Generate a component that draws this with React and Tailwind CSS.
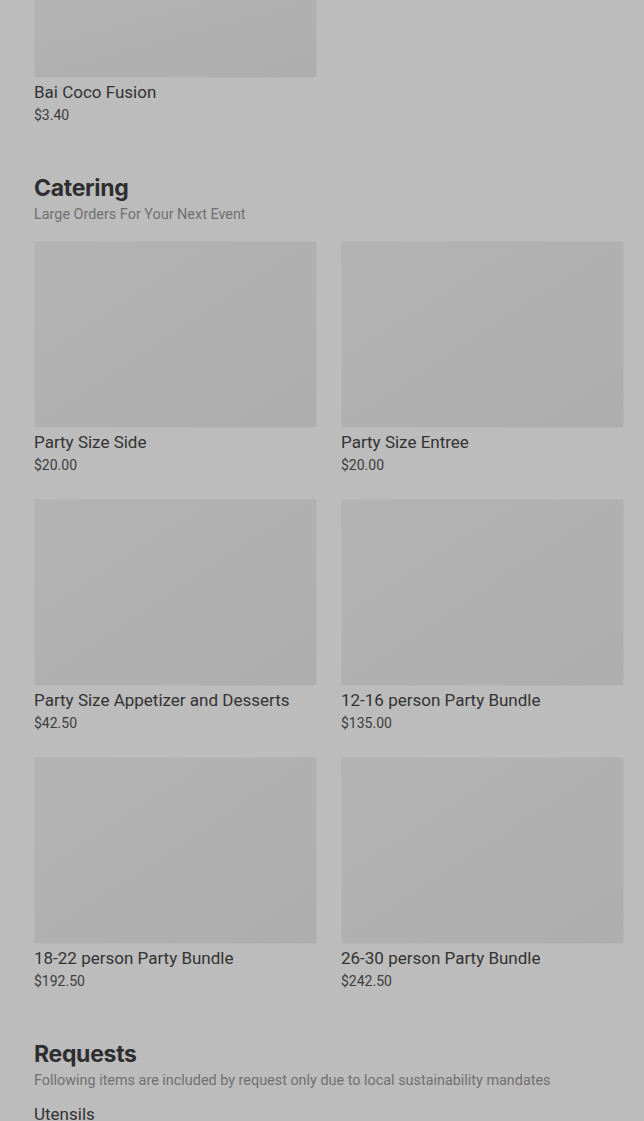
const catering = [
  { name: 'Party Size Side', price: '$20.00' },
  { name: 'Party Size Entree', price: '$20.00' },
  { name: 'Party Size Appetizer and Desserts', price: '$42.50' },
  { name: '12-16 person Party Bundle', price: '$135.00' },
  { name: '18-22 person Party Bundle', price: '$192.50' },
  { name: '26-30 person Party Bundle', price: '$242.50' },
];

function Item({ name, price, imgClass = 'h-[187px]' }) {
  return (
    <div className="flex flex-col">
      <div
        className={`${imgClass} rounded-[2px] border border-[#b6b6b6] bg-gradient-to-br from-[#b3b3b3] to-[#aeaeae]`}
      />
      <div className="mt-[2px] text-[17px] leading-6 text-[#333333]">{name}</div>
      <div className="mt-px text-[14px] leading-5 text-[#3d3d3d]">{price}</div>
    </div>
  );
}

function Section({ title, subtitle, children }) {
  return (
    <section className="flex flex-col">
      <h2 className="text-[23px] leading-8 font-bold tracking-[-0.3px] text-[#2e2e2e] font-['Inter',sans-serif]">
        {title}
      </h2>
      <p className="mt-px text-[14.4px] leading-5 text-[#707070]">{subtitle}</p>
      {children}
    </section>
  );
}

export default function App() {
  return (
    <div className="min-h-[1121px] bg-[#bcbcbc] pl-[34px] pr-[20px] font-['Roboto',sans-serif] overflow-hidden">
      <div className="grid grid-cols-2 gap-x-6">
        <Item name="Bai Coco Fusion" price="$3.40" imgClass="h-[79px] -mt-px" />
      </div>

      <div className="mt-[47px]">
        <Section title="Catering" subtitle="Large Orders For Your Next Event">
          <div className="mt-4 grid grid-cols-2 gap-x-6 gap-y-6">
            {catering.map((c) => (
              <Item key={c.name} name={c.name} price={c.price} />
            ))}
          </div>
        </Section>
      </div>

      <div className="mt-[47px]">
        <Section
          title="Requests"
          subtitle="Following items are included by request only due to local sustainability mandates"
        >
          <div className="mt-[11px] text-[17px] leading-6 text-[#333333]">Utensils</div>
        </Section>
      </div>
    </div>
  );
}
